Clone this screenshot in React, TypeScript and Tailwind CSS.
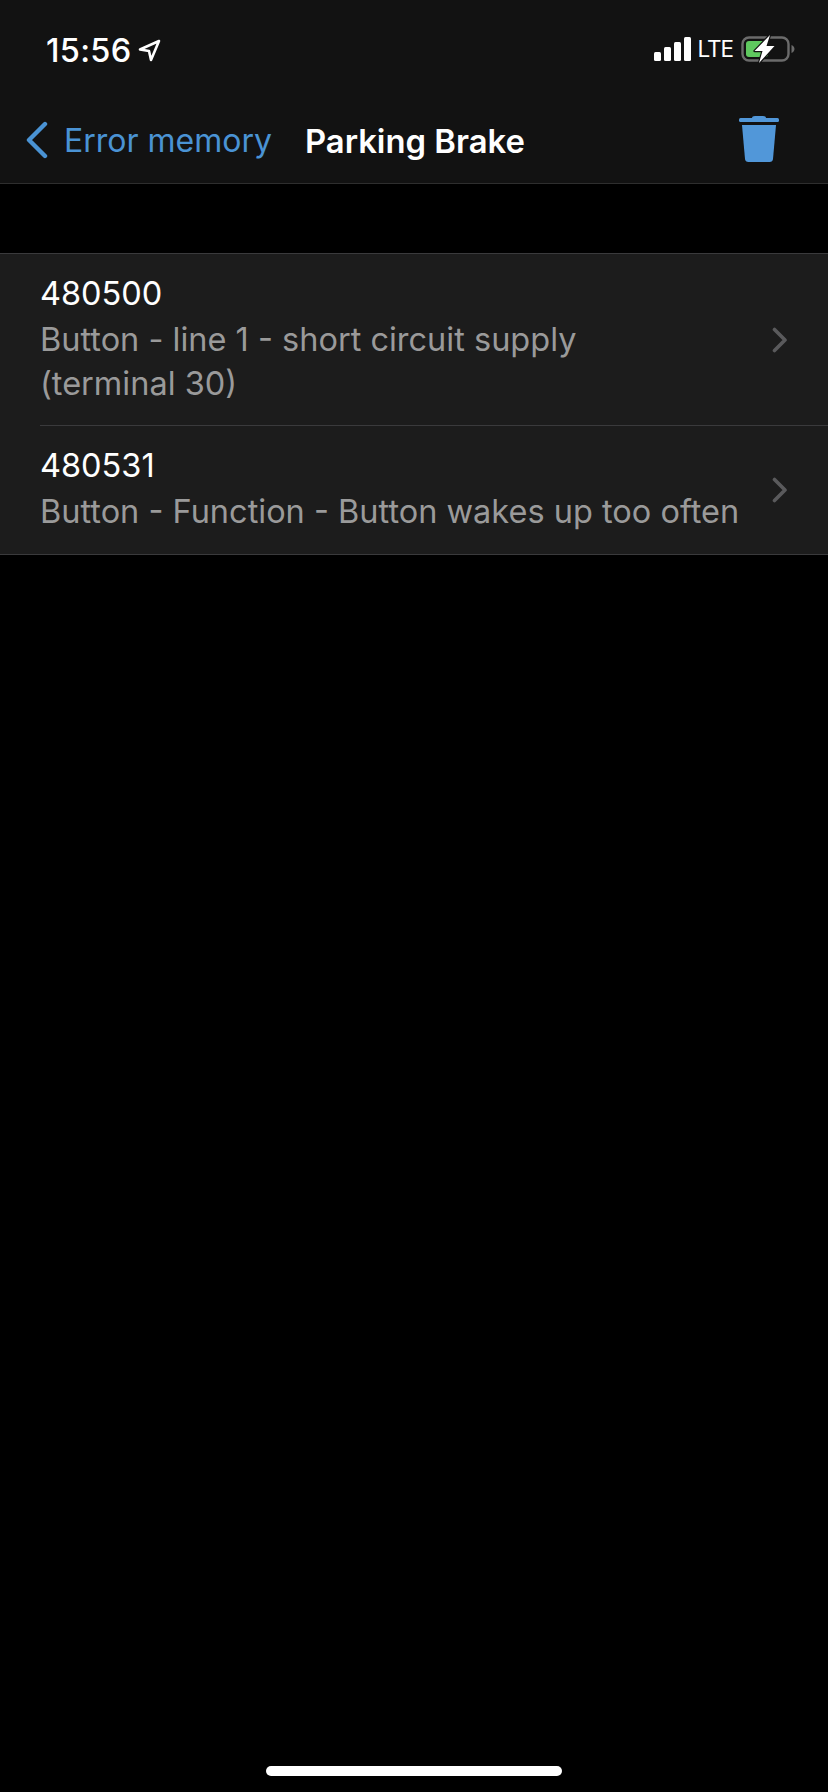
import React, { FC } from 'react';

interface FaultRowProps {
  code: string;
  text: string;
  last?: boolean;
}

const StatusBar: FC = () => {
  return (
    <div className="flex h-[88px] items-start justify-between pl-[46px] pr-[33px] pt-[31px]">
      <div className="flex items-center">
        <span className="text-[32.5px] leading-[40px] font-medium tracking-[0.3px] text-white">15:56</span>
        <svg className="ml-[6px] mt-[-1px]" width="23" height="23" viewBox="0 0 23 23" fill="none">
          <path d="M21 2 L2 10.5 L11 12 L13 21 Z" stroke="white" strokeWidth="2.6" strokeLinejoin="round" />
        </svg>
      </div>
      <div className="flex items-center pt-[4px]">
        <svg width="37" height="24" viewBox="0 0 37 24" fill="white">
          <rect x="0" y="15" width="7" height="9" rx="1.5" />
          <rect x="10" y="10" width="7" height="14" rx="1.5" />
          <rect x="20" y="5" width="7" height="19" rx="1.5" />
          <rect x="30" y="0" width="7" height="24" rx="1.5" />
        </svg>
        <span className="ml-[6px] text-[22.5px] leading-[24px] tracking-[-1px] text-white">LTE</span>
        <svg className="ml-[8px]" width="54" height="28" viewBox="0 0 54 28" fill="none">
          <rect x="1.5" y="2.5" width="46" height="23" rx="6.5" stroke="#6b6b6b" strokeWidth="2.4" />
          <path d="M50.5 10 C52.5 11 53.5 12.5 53.5 14 C53.5 15.5 52.5 17 50.5 18 Z" fill="#6b6b6b" />
          <rect x="5" y="6" width="22" height="16" rx="3" fill="#5fc85f" />
          <path
            d="M29 0 L13.5 16 L21.5 16 L18 28 L33.5 11 L25.5 11 Z"
            fill="white"
            stroke="#121212"
            strokeWidth="2.4"
            strokeLinejoin="round"
            paintOrder="stroke"
          />
        </svg>
      </div>
    </div>
  );
};

const NavBar: FC = () => {
  return (
    <div className="flex h-[96px] items-start border-b border-[#2e2e2e] pl-[25px] pr-[49px] pt-[31px]">
      <svg className="mt-[2px] shrink-0" width="23" height="38" viewBox="0 0 23 38" fill="none">
        <path d="M20 3 L4 19 L20 35" stroke="#4a93d4" strokeWidth="4.4" strokeLinecap="round" strokeLinejoin="round" />
      </svg>
      <span className="ml-[16px] text-[32px] leading-[44px] text-[#4a93d4]">Error memory</span>
      <span className="ml-[33px] text-[32.8px] leading-[44px] font-semibold text-white">Parking Brake</span>
      <svg className="ml-auto mt-[-4px] shrink-0" width="40" height="48" viewBox="0 0 40 48" fill="#5197d9">
        <path d="M13 3 Q13 1 16 1 L24 1 Q27 1 27 3 Z" />
        <rect x="0" y="3" width="40" height="4" rx="1.5" />
        <path d="M3 10 L37 10 L34 44 Q33.7 47 30.5 47 L9.5 47 Q6.3 47 6 44 Z" />
      </svg>
    </div>
  );
};

const FaultRow: FC<FaultRowProps> = ({ code, text, last }) => {
  return (
    <div className="flex pl-[40px]">
      <div className={`flex flex-1 items-center justify-between pr-[40px] ${last ? '' : 'border-b border-[#3a3a3c]'}`}>
        <div className={`pt-[16px] ${last ? 'pb-[20px]' : 'pb-[19px]'}`}>
          <div className="text-[32.5px] leading-[48px] text-white">{code}</div>
          <div className="whitespace-pre text-[32.5px] leading-[44px] text-[#9a9a9a]">{text}</div>
        </div>
        <svg width="16" height="26" viewBox="0 0 16 26" fill="none">
          <path d="M2.5 2.5 L13 13 L2.5 23.5" stroke="#5a5a5c" strokeWidth="3.6" strokeLinecap="round" strokeLinejoin="round" />
        </svg>
      </div>
    </div>
  );
};

const App: FC = () => {
  return (
    <div className="flex min-h-[1792px] flex-col bg-black font-['Inter',sans-serif]">
      <div className="bg-[#121212]">
        <StatusBar />
        <NavBar />
      </div>
      <div className="mt-[69px] border-y border-[#3a3a3c] bg-[#1c1c1c]">
        <FaultRow code="480500" text={'Button - line 1 - short circuit supply\n(terminal 30)'} />
        <FaultRow code="480531" text="Button - Function - Button wakes up too often" last />
      </div>
      <div className="flex-1" />
      <div className="mx-auto mb-[16px] h-[10px] w-[296px] rounded-full bg-white" />
    </div>
  );
};

export default App;
